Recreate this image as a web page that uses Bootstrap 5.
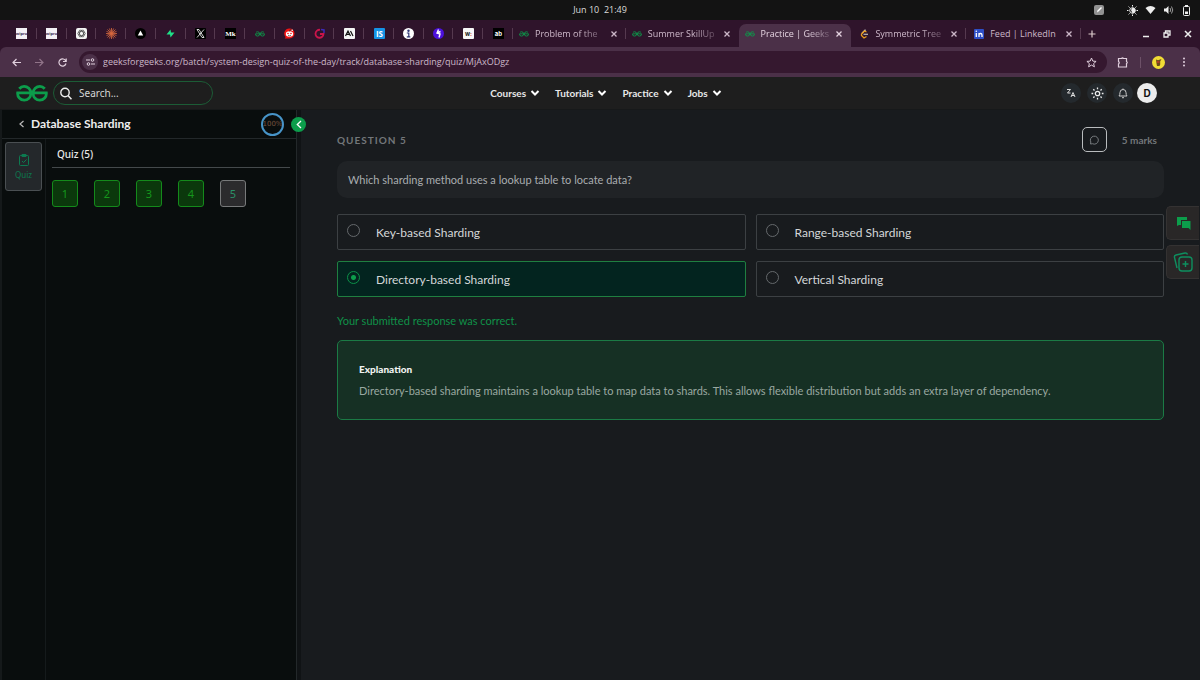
<!DOCTYPE html>
<html lang="en" data-bs-theme="dark">
<head>
<meta charset="utf-8">
<meta name="viewport" content="width=device-width, initial-scale=1">
<title>Practice | GeeksforGeeks</title>
<link href="https://cdn.jsdelivr.net/npm/bootstrap@5.3.0/dist/css/bootstrap.min.css" rel="stylesheet">
<style>
:root { --ui: "Open Sans", "Noto Sans", sans-serif; --geo: Lato, sans-serif; --gfg: #0c9d4b; }
body { font-family: var(--geo); font-size: 11px; line-height: 16px; background: #181b1e; color: #ddd; }
svg { display: block; flex: none; }
button { font: inherit; color: inherit; background: none; border: 0; padding: 0; }
.system-bar { font: 9px/20px var(--ui); height: 20px; background: #131313; color: #dcdcdc; display: grid; grid-template-columns: 1fr auto 1fr; }
.status { gap: 7px; }
.tab-strip { height: 27px; background: #2f142b; font-family: var(--ui); font-size: 9px; color: #cdb8c9; padding-left: 7px; }
.pins { flex: 0 1 506px; min-width: 0; }
.pin, .page-tab { flex: 1 1 0; min-width: 0; height: 27px; position: relative; }
.pin::after, .page-tab.split::after { content: ""; width: 1px; height: 11px; background: #55394f; position: absolute; right: 0; top: 8px; }
.pages { flex: 0 1 568px; min-width: 0; }
.page-tab { padding: 0 8px 0 6px; gap: 6px; color: inherit; text-decoration: none; }
.page-tab .ttl { flex: 1; white-space: nowrap; line-height: 16px; }
.page-tab .fade-end { -webkit-mask-image: linear-gradient(90deg, #000 45px, transparent 76px); mask-image: linear-gradient(90deg, #000 45px, transparent 76px); }
.page-tab.current { background: #4b3048; border-radius: 7px 7px 0 0; margin: 4px 0 0; height: 23px; padding-bottom: 4px; color: #e4d3e0; }
.window-keys { padding: 0 8px 0 7px; gap: 13px; }
.tool-back { background: #2f142b; }
.tool-strip { height: 30px; background: #4b3048; color: #e1d0de; border-radius: 6px 6px 0 0; padding: 0 11px 0 12px; }
.arrows { gap: 14px; margin-right: 12px; }
.address { height: 22px; border-radius: 11px; background: #35182f; padding: 0 10px 0 3px; gap: 5px; }
.address .tune { width: 16px; height: 16px; border-radius: 50%; background: #4b3048; }
.address input { background: none; border: 0; outline: 0; padding: 0; color: #cdb9ca; font: 9px/16px var(--ui); min-width: 0; }
.extras { margin: 0 2px 0 10px; gap: 11px; }
.extras .rule { width: 1px; height: 11px; background: #6d5168; }
.site-bar { height: 33px; background: #1e1e1e; padding-left: 12px; display: grid; grid-template-columns: 1fr auto 1fr; align-items: center; border-bottom: 1px solid #17191a; }
.brand { padding-left: 4px; gap: 5px; }
.find { width: 160px; height: 24px; border: 1px solid #1c5c36; border-radius: 12px; padding: 0 6px; gap: 7px; }
.find input { background: none; border: 0; outline: 0; padding: 0; font: 10px/16px "Noto Sans", sans-serif; color: #ddd; min-width: 0; }
.find input::placeholder { color: #d6d6d6; opacity: 1; }
.menu { gap: 15px; }
.menu a { color: #e8e8e8; text-decoration: none; font: 700 10px/16px var(--geo); gap: 4px; }
.tools { gap: 6px; padding-right: 43px; }
.round { width: 20px; height: 20px; border-radius: 50%; background: #24292d; }
.round.user { background: #ececec; color: #111; font: 700 10px/20px Inter, sans-serif; margin-left: -2px; }
.side { flex: 0 0 297px; background: #090d0d; border-left: 2px solid #15191a; border-right: 1px solid #23282a; }
.side-head { height: 29px; border-bottom: 1px solid #23282a; padding: 0 12px 0 17px; gap: 7px; }
.side-head h1 { font: 700 12px/16px var(--geo); color: #eee; }
.ring { width: 23px; height: 23px; border: 2px solid #4794c8; border-radius: 50%; font: 7px/19px "DejaVu Sans", sans-serif; color: #75533f; }
.fold { width: 15px; height: 15px; border-radius: 50%; background: #0c9d4b; left: 291px; top: 7px; color: #fff; }
.gutter { flex: 0 0 4px; background: #101315; }
.rail { flex: 0 0 44px; border-right: 1px solid #151a1b; padding: 3px; }
.rail button { width: 37px; height: 49px; border: 1px solid #4a4f52; border-radius: 3px; background: #24282b; color: #0d7a50; font: 8px/10px "Noto Sans", sans-serif; gap: 4px; }
.quiz-list { padding: 0 6px; }
.quiz-list h2 { font: 500 10px/16px "Noto Sans", sans-serif; color: #e8e8e8; padding: 7px 5px 5px; border-bottom: 1px solid #44494b; }
.nums { gap: 16px; padding-top: 12px; }
.num { width: 26px; height: 27px; border: 1px solid #148a1b; border-radius: 3px; background: #0b380c; color: #15961c; font: 11px/16px "Noto Sans", sans-serif; }
.num.open { border-color: #77797a; background: #2b2b2d; color: #2a9168; }
.stage { padding: 17px 36px; background: #181b1e; }
.q-label { font: 700 10px/16px var(--geo); letter-spacing: 1px; color: #73777a; }
.q-meta { gap: 15px; }
.ask { width: 25px; height: 25px; border: 1px solid #b9bcbe; border-radius: 5px; color: #777b7e; }
.marks { font: 700 10px/16px var(--geo); color: #73777a; padding-right: 7px; }
.prompt { background: #202326; border-radius: 10px; padding: 11px; line-height: 15px; color: #a9adb0; margin: 9px 0 16px; }
.choices { gap: 11px 10px; display: grid; grid-template-columns: 1fr 1fr; }
.choice { border: 1px solid #3c4043; border-radius: 2px; height: 36px; padding: 9px; gap: 16px; font-size: 12px; line-height: 18px; color: #d4d7d9; }
.choice input { appearance: none; width: 13px; height: 13px; border: 1px solid #65696c; border-radius: 50%; margin: 0; flex: none; }
.choice.right { background: #03241f; border-color: #1f7f40; }
.choice.right input { border-color: #0c9148; background: radial-gradient(circle, #0c9d4b 2px, transparent 3px); }
.verdict { color: #0f9148; margin: 16px 0 11px; }
.why { border: 1px solid #1b7a45; border-radius: 5px; background: #163024; padding: 20px 21px; color: #9aa8a1; line-height: 17px; }
.why h3 { font: 900 10px/17px var(--geo); color: #f0f3f1; margin-bottom: 4px; }
.dock { right: 1px; top: 96px; gap: 5px; }
.dock button { width: 33px; height: 34px; background: #292727; border: 1px solid #343232; border-right: 0; border-radius: 5px 0 0 5px; color: #0c9d4b; }
</style>
</head>
<body>
<svg width="0" height="0" class="position-absolute" aria-hidden="true">
  <defs>
    <symbol id="gfg" viewBox="0 0 30 16"><path d="M3 3.500C4.500 1.800 6 1.300 7.500 1.300A6.500 6.500 0 0 1 14 7.500H1.500A6.200 6.200 0 0 0 7.700 14.300A6.500 6.500 0 0 0 14 8M27 3.500C25.500 1.800 24 1.300 22.500 1.300A6.500 6.500 0 0 0 16 7.500H28.500A6.200 6.200 0 0 1 22.300 14.300A6.500 6.500 0 0 1 16 8" fill="none" stroke="#0c9d4b" stroke-width="2.600"/></symbol>
    <symbol id="x" viewBox="0 0 8 8"><path d="M1.500 1.500l5 5m0-5l-5 5" stroke="currentColor" stroke-width="1.300"/></symbol>
    <symbol id="down" viewBox="0 0 10 8"><path d="M1.500 2l3.500 3.500L8.500 2" fill="none" stroke="#fff" stroke-width="2"/></symbol>
  </defs>
</svg>
<div class="d-flex flex-column min-vh-100">
  <div class="system-bar">
    <span></span>
    <time>Jun 10&nbsp; 21:49</time>
    <div class="status d-flex align-items-center justify-content-end pe-2">
      <svg width="10" height="10" class="me-3" viewBox="0 0 10 10"><rect width="10" height="10" rx="2" fill="#929292"/><path d="M3 7.500l.5-2L7 2l1 1-3.500 3.500z" fill="#fff"/></svg>
      <svg width="11" height="11" viewBox="0 0 11 11"><circle cx="5.500" cy="5.500" r="2.800" fill="none" stroke="#eee"/><path d="M5.500 2.700a2.800 2.800 0 0 1 0 5.600L4 5z" fill="#eee"/><path d="M5.500 0v1.500m0 8V11M0 5.500h1.500m8 0H11M1.600 1.600l1 1m5.800 5.800l1 1m0-7.800l-1 1M2.600 8.400l-1 1" stroke="#eee"/></svg>
      <svg width="11" height="10" viewBox="0 0 11 10"><path d="M.5 3Q5.500-.8 10.500 3L5.500 9z" fill="#eee"/></svg>
      <svg width="11" height="10" viewBox="0 0 11 10"><path d="M1 3.500h2L5.500 1v8L3 6.500H1z" fill="#eee"/><path d="M7 3q1.500 2 0 4m1.500-5.500q2.500 3.500 0 7" fill="none" stroke="#999"/></svg>
      <svg width="11" height="11" viewBox="0 0 11 11"><path d="M4 0h3v1.500H4z" fill="#eee"/><rect x="2.500" y="1.500" width="6" height="9" rx="1" fill="none" stroke="#eee"/><path d="M4 6.500h3V9H4z" fill="#eee"/></svg>
    </div>
  </div>

  <div class="tab-strip d-flex" role="tablist">
    <div class="pins d-flex">
      <div class="pin d-flex align-items-center justify-content-center"><svg width="11" height="11" viewBox="0 0 11 11"><rect width="11" height="11" fill="#f3eff5"/><text x="5.500" y="7" font-size="4" font-weight="700" text-anchor="middle" fill="#38294d">wipro</text></svg></div>
      <div class="pin d-flex align-items-center justify-content-center"><svg width="11" height="11" viewBox="0 0 11 11"><rect width="11" height="11" fill="#f3eff5"/><text x="5.500" y="7" font-size="4" font-weight="700" text-anchor="middle" fill="#38294d">wipro</text></svg></div>
      <div class="pin d-flex align-items-center justify-content-center"><svg width="11" height="11" viewBox="0 0 11 11"><rect width="11" height="11" rx="2" fill="#f4f4f4"/><g fill="none" stroke="#333" stroke-width=".6"><ellipse cx="5.500" cy="5.500" rx="3.800" ry="2"/><ellipse cx="5.500" cy="5.500" rx="3.800" ry="2" transform="rotate(60 5.500 5.500)"/><ellipse cx="5.500" cy="5.500" rx="3.800" ry="2" transform="rotate(120 5.500 5.500)"/></g></svg></div>
      <div class="pin d-flex align-items-center justify-content-center"><svg width="11" height="11" viewBox="0 0 11 11"><path d="M5.500 0v11M0 5.500h11M1.500 1.500l8 8m0-8l-8 8M3.400.5l4.200 10M.5 3.400l10 4.200M7.600.5l-4.200 10M10.500 3.400L.5 7.600" stroke="#d9693f" stroke-width=".8"/></svg></div>
      <div class="pin d-flex align-items-center justify-content-center"><svg width="11" height="11" viewBox="0 0 11 11"><circle cx="5.500" cy="5.500" r="5.500"/><path d="M5.500 2.500L8.200 7.500H2.800z" fill="#fff"/></svg></div>
      <div class="pin d-flex align-items-center justify-content-center"><svg width="11" height="11" viewBox="0 0 11 11"><path d="M5.500 1.500L1.500 6.500H5L5.500 9.500 9.500 4.500H6z" fill="#1ee088"/></svg></div>
      <div class="pin d-flex align-items-center justify-content-center"><svg width="11" height="11" viewBox="0 0 11 11"><rect width="11" height="11" rx="1"/><path d="M2 1.500h2l5 8H7zM9 1.500l-7 8" fill="none" stroke="#fff" stroke-width=".8"/></svg></div>
      <div class="pin d-flex align-items-center justify-content-center"><svg width="11" height="11" viewBox="0 0 11 11"><rect width="11" height="11"/><text x="5.500" y="8" font-family="Liberation Serif" font-size="7" font-weight="700" text-anchor="middle" fill="#fff">Mk</text></svg></div>
      <div class="pin d-flex align-items-center justify-content-center"><svg width="10" height="6"><use href="#gfg"/></svg></div>
      <div class="pin d-flex align-items-center justify-content-center"><svg width="11" height="11" viewBox="0 0 11 11"><path d="M5.500.5a5 5 0 1 1 0 10H.7l1-1.500A5 5 0 0 1 5.500.5" fill="#f21414"/><ellipse cx="5.500" cy="6" rx="3.700" ry="2.700" fill="#fff"/><circle cx="4" cy="5.500" r=".8" fill="#f21414"/><circle cx="7" cy="5.500" r=".8" fill="#f21414"/><path d="M4 7.300q1.500 1 3 0M5.500 3.500L6 1.800l2 .3" fill="none" stroke="#222" stroke-width=".6"/><circle cx="8.200" cy="2.200" r=".8" fill="#fff"/></svg></div>
      <div class="pin d-flex align-items-center justify-content-center"><svg width="11" height="11" viewBox="0 0 11 11"><path d="M6 1.800A4 4 0 1 0 9.500 6H6" fill="none" stroke="#c9154a" stroke-width="1.800"/><path d="M7 1.500l3 .5v3" fill="none" stroke="#3c2bb8" stroke-width="1.500"/></svg></div>
      <div class="pin d-flex align-items-center justify-content-center"><svg width="11" height="11" viewBox="0 0 11 11"><rect width="11" height="11" rx="1" fill="#f5f5f5"/><path d="M1.500 8L4 3l2.500 5M2.500 6.300h3M6.500 3L9 8" fill="none" stroke="#111" stroke-width="1.200"/></svg></div>
      <div class="pin d-flex align-items-center justify-content-center"><svg width="11" height="11" viewBox="0 0 11 11"><rect width="11" height="11" rx="1" fill="#1593e6"/><text x="5.500" y="8.500" font-family="Open Sans" font-size="8" font-weight="700" text-anchor="middle" fill="#fff">IS</text></svg></div>
      <div class="pin d-flex align-items-center justify-content-center"><svg width="11" height="11" viewBox="0 0 11 11"><circle cx="5.500" cy="5.500" r="5.500" fill="#fff"/><circle cx="5.500" cy="2.700" r="1.200" fill="#2c3472"/><path d="M3.800 5h2v3.500M3.800 8.800h3.500" stroke="#2c3472" stroke-width="1.200" fill="none"/></svg></div>
      <div class="pin d-flex align-items-center justify-content-center"><svg width="11" height="11" viewBox="0 0 11 11"><circle cx="5.500" cy="5.500" r="5.500" fill="#4c10dc"/><path d="M5.500 1.500L4 5l3 1-1 3.500M4 5l3.500-1.500" stroke="#fff" stroke-width="1.400" fill="none"/></svg></div>
      <div class="pin d-flex align-items-center justify-content-center"><svg width="11" height="11" viewBox="0 0 11 11"><rect width="11" height="11" rx="1" fill="#f7f7f7"/><text x="5.500" y="7.500" font-family="Inter" font-size="6" font-weight="700" text-anchor="middle" fill="#222">w<tspan fill="#d33">:</tspan></text></svg></div>
      <div class="pin d-flex align-items-center justify-content-center"><svg width="11" height="11" viewBox="0 0 11 11"><rect width="11" height="11"/><text x="5.500" y="7.500" font-family="Inter" font-size="6" font-weight="700" text-anchor="middle" fill="#fff">ab</text></svg></div>
    </div>
    <div class="pages d-flex">
      <a href="#" class="page-tab split d-flex align-items-center" role="tab"><svg width="10" height="6"><use href="#gfg"/></svg><span class="ttl fade-end">Problem of the</span><svg width="8" height="8"><use href="#x"/></svg></a>
      <a href="#" class="page-tab d-flex align-items-center" role="tab"><svg width="10" height="6"><use href="#gfg"/></svg><span class="ttl fade-end">Summer SkillUp</span><svg width="8" height="8"><use href="#x"/></svg></a>
      <a href="#" class="page-tab current d-flex align-items-center" role="tab" aria-selected="true"><svg width="10" height="6"><use href="#gfg"/></svg><span class="ttl fade-end">Practice | Geeks</span><svg width="8" height="8"><use href="#x"/></svg></a>
      <a href="#" class="page-tab split d-flex align-items-center ps-2" role="tab"><svg width="10" height="10" viewBox="0 0 10 10"><path d="M6.500.8L3 4.200" stroke="#ddd" stroke-width="1.300"/><path d="M7.500 3L5.500 2 2.500 5v1.500L5 9l2.500-1.500" fill="none" stroke="#e99a1c" stroke-width="1.300"/><path d="M4.500 5.300H9" stroke="#bbb" stroke-width="1.200"/></svg><span class="ttl fade-end">Symmetric Tree</span><svg width="8" height="8"><use href="#x"/></svg></a>
      <a href="#" class="page-tab split d-flex align-items-center ps-2" role="tab"><svg width="10" height="10" viewBox="0 0 10 10"><rect width="10" height="10" rx="1" fill="#2e4fc7"/><path d="M2.300 4v4M5 8V4m0 2q0-1.500 1.500-1.500T8 6v2" fill="none" stroke="#fff" stroke-width="1.300"/><circle cx="2.300" cy="2.300" r=".8" fill="#fff"/></svg><span class="ttl">Feed | LinkedIn</span><svg width="8" height="8"><use href="#x"/></svg></a>
    </div>
    <div class="window-keys flex-fill d-flex align-items-center">
      <button type="button" class="me-auto" aria-label="New tab"><svg width="8" height="8" viewBox="0 0 8 8"><path d="M4 .5v7M.5 4h7" stroke="#dcc" stroke-width="1.200"/></svg></button>
      <button type="button" aria-label="Minimize"><svg width="8" height="8" viewBox="0 0 8 8"><path d="M1 6.500h6" stroke="#eee" stroke-width="1.500"/></svg></button>
      <button type="button" aria-label="Restore"><svg width="8" height="8" viewBox="0 0 8 8"><path d="M2.500 2.500V1H7v4H5.500M1 3h4v4H1z" fill="none" stroke="#eee" stroke-width="1.300"/></svg></button>
      <button type="button" aria-label="Close"><svg width="8" height="8" viewBox="0 0 8 8"><path d="M1 1l6 6m0-6L1 7" stroke="#eee" stroke-width="1.500"/></svg></button>
    </div>
  </div>

  <div class="tool-back">
    <div class="tool-strip d-flex align-items-center">
      <div class="arrows d-flex align-items-center">
        <button type="button" aria-label="Back"><svg width="9" height="9" viewBox="0 0 9 9"><path d="M9 4.500H1M4.500 1L1 4.500 4.500 8" fill="none" stroke="currentColor" stroke-width="1.200"/></svg></button>
        <button type="button" aria-label="Forward"><svg width="9" height="9" viewBox="0 0 9 9"><path d="M0 4.500h8M4.500 1L8 4.500 4.500 8" fill="none" stroke="#917489" stroke-width="1.200"/></svg></button>
        <button type="button" aria-label="Reload"><svg width="9" height="9" viewBox="0 0 9 9"><path d="M7.800 3A3.600 3.600 0 1 0 8 5.500M8.200.5v3H5" fill="none" stroke="currentColor" stroke-width="1.200"/></svg></button>
      </div>
      <div class="address flex-fill d-flex align-items-center">
        <button type="button" class="tune d-flex align-items-center justify-content-center" aria-label="Site information"><svg width="9" height="8" viewBox="0 0 9 8"><path d="M0 2h4m1 4h4" stroke="currentColor" stroke-width="1.200"/><circle cx="6.500" cy="2" r="1.300" fill="none" stroke="currentColor"/><circle cx="2.500" cy="6" r="1.300" fill="none" stroke="currentColor"/></svg></button>
        <input class="flex-fill" type="text" aria-label="Address" value="geeksforgeeks.org/batch/system-design-quiz-of-the-day/track/database-sharding/quiz/MjAxODgz">
        <svg width="11" height="11" viewBox="0 0 11 11"><path d="M5.500 1l1.300 3.100 3.300.3-2.500 2.200.8 3.200-2.900-1.700-2.900 1.700.8-3.200L.9 4.400l3.300-.3z" fill="none" stroke="currentColor"/></svg>
      </div>
      <div class="extras d-flex align-items-center">
        <svg width="12" height="11" viewBox="0 0 12 11"><path d="M1.500 1.500h3q1-1 2 0h3v3q1.500 1 0 2v3.500h-8V7q1.500-1.200 0-2.500z" fill="none" stroke="currentColor" stroke-width="1.200"/></svg>
        <span class="rule"></span>
        <svg width="13" height="13" viewBox="0 0 13 13"><circle cx="6.500" cy="6.500" r="6.500" fill="#f0dc35"/><path d="M4 3.500l2 .8L9.500 3 8.200 5.500v3L7.500 10H5L4.500 7.500z" fill="#6b4a1a"/><path d="M5 6h2.500" stroke="#e33"/></svg>
        <svg width="11" height="10" viewBox="-8 0 11 10" fill="currentColor"><circle cx="0" cy="1.500" r="1"/><circle cx="0" cy="5" r="1"/><circle cx="0" cy="8.500" r="1"/></svg>
      </div>
    </div>
  </div>

  <header class="site-bar">
    <div class="brand d-flex align-items-center">
      <a href="#" aria-label="Home"><svg width="32" height="17"><use href="#gfg"/></svg></a>
      <form class="find d-flex align-items-center" role="search">
        <svg width="12" height="13" viewBox="0 0 12 13"><circle cx="5" cy="5.500" r="4.200" fill="none" stroke="#eee" stroke-width="1.400"/><path d="M8 8.500l3.500 3.800" stroke="#eee" stroke-width="1.600"/></svg>
        <input class="flex-fill" type="search" aria-label="Search" placeholder="Search...">
      </form>
    </div>
    <nav class="menu d-flex">
      <a class="d-flex align-items-center" href="#">Courses <svg width="10" height="8"><use href="#down"/></svg></a>
      <a class="d-flex align-items-center" href="#">Tutorials <svg width="10" height="8"><use href="#down"/></svg></a>
      <a class="d-flex align-items-center" href="#">Practice <svg width="10" height="8"><use href="#down"/></svg></a>
      <a class="d-flex align-items-center" href="#">Jobs <svg width="10" height="8"><use href="#down"/></svg></a>
    </nav>
    <div class="tools d-flex justify-content-end">
      <button type="button" class="round d-flex align-items-center justify-content-center" aria-label="Language"><svg width="10" height="10" viewBox="0 0 10 10"><path d="M1 1.500h3.500L1.500 5h3M5 9l2-4.500L9 9M5.700 7.500h2.600" fill="none" stroke="#ddd"/></svg></button>
      <button type="button" class="round d-flex align-items-center justify-content-center" aria-label="Theme"><svg width="13" height="13" viewBox="0 0 13 13" stroke="#eee" fill="none" stroke-width="1.300"><circle cx="6.500" cy="6.500" r="2.200"/><path d="M6.500 .5v1.700m0 8.600v1.700M.5 6.500h1.700m8.600 0h1.700M2.300 2.300l1.200 1.200m6 6l1.200 1.200m0-8.400L9.500 3.500m-6 6l-1.200 1.200"/></svg></button>
      <button type="button" class="round d-flex align-items-center justify-content-center" aria-label="Notifications"><svg width="10" height="11" viewBox="0 0 10 11" fill="none" stroke="#ccc"><path d="M1 8q1-1 1-3.500a3 3 0 0 1 6 0Q8 7 9 8zM4 9.700h2M5 .5v1"/></svg></button>
      <button type="button" class="round user" aria-label="Account">D</button>
    </div>
  </header>

  <div class="d-flex flex-fill position-relative">
    <aside class="side d-flex flex-column">
      <div class="side-head d-flex align-items-center">
        <a href="#" aria-label="Back"><svg width="5" height="8" viewBox="0 0 5 8"><path d="M4.500 1L1 4l3.500 3" fill="none" stroke="#bbb" stroke-width="1.200"/></svg></a>
        <h1 class="m-0 me-auto">Database Sharding</h1>
        <span class="ring d-flex justify-content-center">100%</span>
      </div>
      <div class="d-flex flex-fill">
        <div class="rail">
          <button type="button" class="d-flex flex-column align-items-center justify-content-center"><svg width="10" height="12" viewBox="0 0 10 12" fill="none" stroke="currentColor"><rect x=".5" y="1.500" width="9" height="10" rx="1"/><path d="M3 1.500V.5h4v2H3zM3 7l1.500 1.500L7.500 5.500"/></svg>Quiz</button>
        </div>
        <div class="quiz-list flex-fill">
          <h2 class="m-0">Quiz (5)</h2>
          <div class="nums d-flex flex-wrap">
            <button type="button" class="num">1</button>
            <button type="button" class="num">2</button>
            <button type="button" class="num">3</button>
            <button type="button" class="num">4</button>
            <button type="button" class="num open">5</button>
          </div>
        </div>
      </div>
    </aside>
    <div class="gutter"></div>
    <button type="button" class="fold position-absolute d-flex align-items-center justify-content-center" aria-label="Collapse sidebar"><svg width="6" height="9" viewBox="0 0 6 9"><path d="M5 1L1.300 4.500 5 8" fill="none" stroke="currentColor" stroke-width="1.300"/></svg></button>

    <main class="stage flex-fill">
      <div class="q-meta d-flex align-items-center">
        <span class="q-label me-auto">QUESTION 5</span>
        <button type="button" class="ask d-flex align-items-center justify-content-center" aria-label="Comments"><svg width="10" height="10" viewBox="0 0 10 10"><path d="M1.500 9l.3-2A4 4 0 1 1 3.500 8.700z" fill="none" stroke="currentColor"/></svg></button>
        <span class="marks">5 marks</span>
      </div>
      <p class="prompt">Which sharding method uses a lookup table to locate data?</p>
      <div class="choices" role="radiogroup" aria-label="Answers">
        <label class="choice d-flex"><input type="radio" name="answer">Key-based Sharding</label>
        <label class="choice d-flex"><input type="radio" name="answer">Range-based Sharding</label>
        <label class="choice right d-flex"><input type="radio" name="answer" checked>Directory-based Sharding</label>
        <label class="choice d-flex"><input type="radio" name="answer">Vertical Sharding</label>
      </div>
      <p class="verdict">Your submitted response was correct.</p>
      <section class="why">
        <h3>Explanation</h3>
        <p class="m-0">Directory-based sharding maintains a lookup table to map data to shards. This allows flexible distribution but adds an extra layer of dependency.</p>
      </section>
    </main>
    <div class="dock position-absolute d-flex flex-column">
      <button type="button" class="d-flex align-items-center justify-content-center" aria-label="Discussion"><svg width="15" height="14" viewBox="0 0 15 14" fill="currentColor"><path d="M1 1h10v3H5v5H3L1 10z"/><path d="M6 5h8.500v9L12.500 12H6z"/></svg></button>
      <button type="button" class="d-flex align-items-center justify-content-center" aria-label="Add card"><svg width="20" height="20" viewBox="0 0 20 20" fill="none" stroke="#0e8f5f" stroke-width="1.400"><rect x="6" y="5" width="13" height="14" rx="3"/><path d="M12.500 9v6M9.500 12h6M4 16L1.500 5.500Q1 3.500 3 3l9-2q2-.3 2.500 1.500"/></svg></button>
    </div>
  </div>
</div>
<script src="https://cdn.jsdelivr.net/npm/bootstrap@5.3.0/dist/js/bootstrap.bundle.min.js"></script>
</body>
</html>
